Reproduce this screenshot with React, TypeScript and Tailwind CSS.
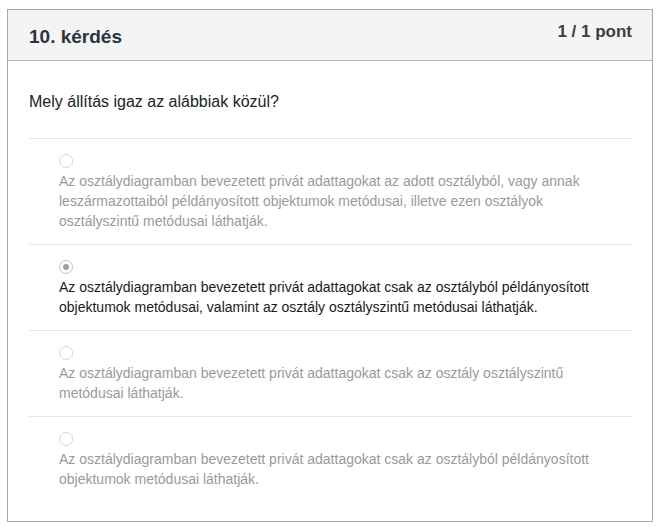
const options = [
  {
    text: "Az osztálydiagramban bevezetett privát adattagokat az adott osztályból, vagy annak leszármazottaiból példányosított objektumok metódusai, illetve ezen osztályok osztályszintű metódusai láthatják.",
    selected: false,
  },
  {
    text: "Az osztálydiagramban bevezetett privát adattagokat csak az osztályból példányosított objektumok metódusai, valamint az osztály osztályszintű metódusai láthatják.",
    selected: true,
  },
  {
    text: "Az osztálydiagramban bevezetett privát adattagokat csak az osztály osztályszintű metódusai láthatják.",
    selected: false,
  },
  {
    text: "Az osztálydiagramban bevezetett privát adattagokat csak az osztályból példányosított objektumok metódusai láthatják.",
    selected: false,
  },
];

function Radio({ checked }: { checked: boolean }) {
  return (
    <span
      className={
        checked
          ? "flex items-center justify-center w-[14px] h-[14px] rounded-full border border-[#c4c4c4] bg-white"
          : "flex items-center justify-center w-[14px] h-[14px] rounded-full border border-[#d6d6d6] bg-white"
      }
    >
      {checked && <span className="w-[6px] h-[6px] rounded-full bg-[#a0a0a0]" />}
    </span>
  );
}

export default function App() {
  return (
    <div className="bg-white min-h-screen pt-[9px] pl-[7px] font-['Liberation_Sans',Arial,sans-serif]">
      <div className="w-[646px] h-[513px] border border-[#a9a9a9] flex flex-col">
        {/* fejléc */}
        <div className="h-[51px] shrink-0 bg-[#f4f4f4] border-b border-[#b5b5b5] flex justify-between pl-[21px] pr-[20px]">
          <h2 className="pt-[15px] text-[19px] leading-[24px] font-bold text-[#2b3440]">10. kérdés</h2>
          <span className="pt-[12px] text-[17px] leading-[20px] font-bold text-[#3a3f45]">1 / 1 pont</span>
        </div>

        <div className="pl-[21px] pr-[20px] pt-[29px]">
          <p className="text-[16px] leading-[24px] text-[#222] mb-[24px]">Mely állítás igaz az alábbiak közül?</p>

          {options.map((o, i) => (
            <div key={i} className="border-t border-[#e6e6e6] pl-[30px] pr-[18px] pt-[12px] pb-[13px]">
              <div className="h-[20px] flex items-center">
                <Radio checked={o.selected} />
              </div>
              <p
                className={
                  o.selected
                    ? "text-[14px] leading-[20px] text-[#1a1a1a]"
                    : "text-[14px] leading-[20px] text-[#9a9a9a]"
                }
              >
                {o.text}
              </p>
            </div>
          ))}
        </div>
      </div>
    </div>
  );
}
